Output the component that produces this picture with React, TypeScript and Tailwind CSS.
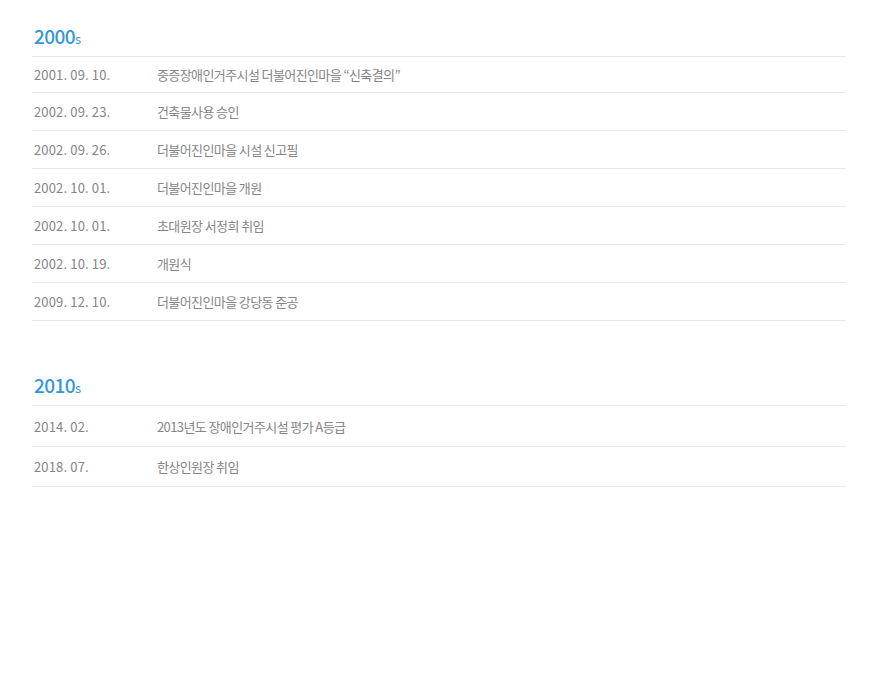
const sections = [
  {
    year: '2000',
    rowH: ['h-[36px]', 'h-[38px]', 'h-[38px]', 'h-[38px]', 'h-[38px]', 'h-[38px]', 'h-[38px]'],
    items: [
      ['2001. 09. 10.', '중증장애인거주시설 더불어진인마을 “신축결의”'],
      ['2002. 09. 23.', '건축물사용 승인'],
      ['2002. 09. 26.', '더불어진인마을 시설 신고필'],
      ['2002. 10. 01.', '더불어진인마을 개원'],
      ['2002. 10. 01.', '초대원장 서정희 취임'],
      ['2002. 10. 19.', '개원식'],
      ['2009. 12. 10.', '더불어진인마을 강당동 준공'],
    ],
  },
  {
    year: '2010',
    rowH: ['h-[41px]', 'h-[40px]'],
    items: [
      ['2014. 02.', '2013년도 장애인거주시설 평가 A등급'],
      ['2018. 07.', '한상인원장 취임'],
    ],
  },
]

export default function App() {
  return (
    <div className="min-h-[700px] bg-white pt-[22px] px-8 font-['Noto_Sans_CJK_KR','Noto_Sans',sans-serif]">
      <div className="w-[814px] space-y-[50px]">
        {sections.map((section) => (
          <div key={section.year}>
            {/* Decade heading */}
            <h2 className="h-[34px] pl-[2px] leading-[28px] text-[#3497da]">
              <span className="text-[19px] font-medium tracking-[-0.6px]">{section.year}</span>
              <span className="text-[13px]">s</span>
            </h2>
            <ul className="border-t border-[#e8e8e8]">
              {section.items.map(([date, text], i) => (
                <li
                  key={i}
                  className={`flex items-center pt-[1px] border-b border-[#e8e8e8] text-[13px] text-[#858585] ${section.rowH[i]}`}
                >
                  <span className="w-[125px] shrink-0 pl-[2px] tracking-[0.15px]">{date}</span>
                  <span className="tracking-[-0.6px]">{text}</span>
                </li>
              ))}
            </ul>
          </div>
        ))}
      </div>
    </div>
  )
}
